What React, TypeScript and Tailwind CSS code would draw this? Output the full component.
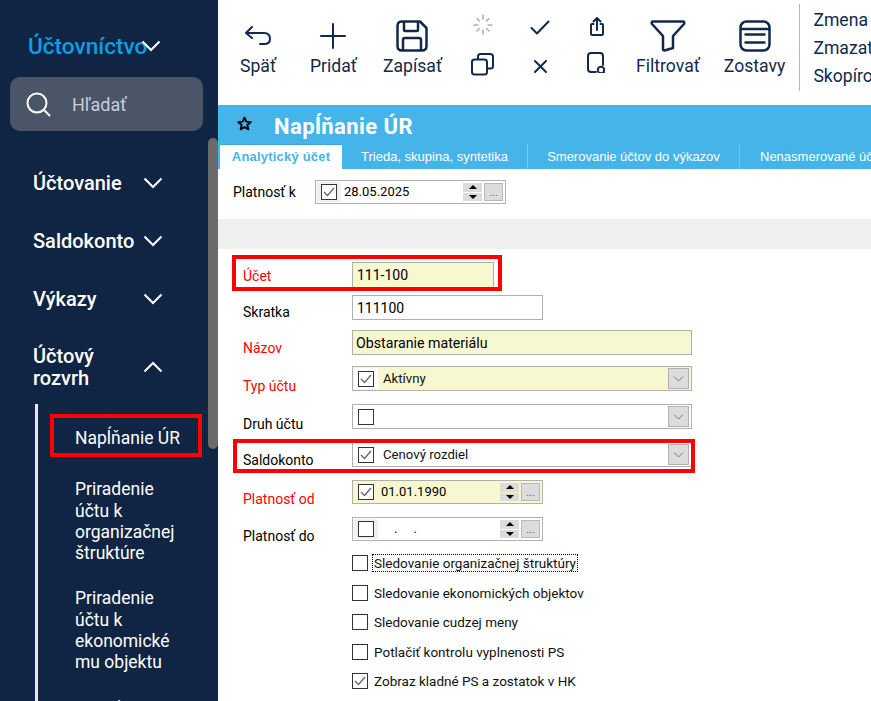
import React from "react";

const navy = "#11294a";

function Chevron({ up = false, className = "" }: { up?: boolean; className?: string }) {
  return (
    <svg width="20" height="12" viewBox="0 0 20 12" className={className} fill="none" stroke="white" strokeWidth="2">
      <path d={up ? "M1.5 10.5 L10 2 L18.5 10.5" : "M1.5 1.5 L10 10 L18.5 1.5"} />
    </svg>
  );
}

function NavItem({ label, className = "" }: { label: string; className?: string }) {
  return (
    <div className={`flex items-center justify-between pl-[33px] pr-[55px] text-[20px] font-medium text-white leading-[22px] ${className}`}>
      <span>{label}</span>
      <Chevron />
    </div>
  );
}

function Sidebar() {
  return (
    <aside className="relative w-[218px] h-full shrink-0 bg-[#0f2543] overflow-hidden">
      <div className="flex items-center pl-[28px] pt-[33px] h-[60px]">
        <span className="text-[22.6px] text-[#0b9fe3] font-medium leading-[26px]">Účtovníctvo</span>
        <Chevron className="-ml-[6px] -mt-[1px]" />
      </div>
      <div className="ml-[10px] mt-[17px] w-[193px] h-[54px] rounded-[10px] bg-[#4a5568] flex items-center pl-[16px]">
        <svg width="25" height="25" viewBox="0 0 25 25" fill="none" stroke="white" strokeWidth="2">
          <circle cx="11" cy="11" r="9.5" />
          <path d="M18 18 L24 24" />
        </svg>
        <span className="ml-[21px] text-[18px] text-[#c9ced6]">Hľadať</span>
      </div>
      <NavItem label="Účtovanie" className="mt-[41px]" />
      <NavItem label="Saldokonto" className="mt-[36px]" />
      <NavItem label="Výkazy" className="mt-[36px]" />
      <div className="mt-[35px] flex items-center justify-between pl-[33px] pr-[55px] text-[20px] font-medium text-white leading-[22px]">
        <span>
          Účtový
          <br />
          rozvrh
        </span>
        <Chevron up />
      </div>
      <div className="mt-[15px] ml-[35px] border-l-[3px] border-[#e8e8e8] pl-[37px] text-[17.5px] leading-[21.3px] text-white h-[300px]">
        <div className="pt-[24px]">Napĺňanie ÚR</div>
        <div className="mt-[30px] w-[104px]">
          Priradenie
          <br />
          účtu k
          <br />
          organizačnej
          <br />
          štruktúre
        </div>
        <div className="mt-[24px] w-[104px]">
          Priradenie
          <br />
          účtu k
          <br />
          ekonomické
          <br />
          mu objektu
        </div>
        <div className="mt-[24px]">Priradenie</div>
      </div>
      <div className="absolute left-[50px] top-[414px] w-[152px] h-[43px] border-[4px] border-[#ff0000]" />
      <div className="absolute left-[208px] top-[138px] w-[10px] h-[311px] rounded-t-[5px] rounded-b-[5px] bg-[#6b6b6b]" />
    </aside>
  );
}

function TButton({ label, icon, className = "" }: { label: string; icon: React.ReactNode; className?: string }) {
  return (
    <div className={`flex flex-col items-center text-[17.6px] leading-[20px] text-[#11294a] ${className}`}>
      <div className="h-[34px] flex items-center justify-center">{icon}</div>
      <div className="mt-[3px] whitespace-nowrap">{label}</div>
    </div>
  );
}

const stroke = { fill: "none", stroke: navy, strokeWidth: 2, strokeLinecap: "round" as const, strokeLinejoin: "round" as const };

function Toolbar() {
  return (
    <div className="h-[105px] flex items-start shrink-0 overflow-hidden relative">
      <TButton
        label="Späť"
        className="ml-[22px] mt-[19px]"
        icon={
          <svg width="28" height="24" viewBox="0 0 28 24" {...stroke}>
            <path d="M8 3 L2 9 L8 14 M2 9 H20 Q26 9 26 15 Q26 20 20 20 H16" />
          </svg>
        }
      />
      <TButton
        label="Pridať"
        className="ml-[34px] mt-[19px]"
        icon={
          <svg width="26" height="26" viewBox="0 0 26 26" {...stroke}>
            <path d="M13 1 V25 M1 13 H25" />
          </svg>
        }
      />
      <TButton
        label="Zapísať"
        className="ml-[26px] mt-[19px]"
        icon={
          <svg width="32" height="32" viewBox="0 0 32 32" {...stroke} strokeWidth="2.5">
            <path d="M6 1.5 H24 L30.5 8 V26 Q30.5 30.5 26 30.5 H6 Q1.5 30.5 1.5 26 V6 Q1.5 1.5 6 1.5 Z" />
            <path d="M8 2 V10 Q8 11 9 11 H21 Q22 11 22 10 V2 M7 30 V20 Q7 18 9 18 H23 Q25 18 25 20 V30" />
          </svg>
        }
      />
      <div className="ml-[29px] mt-[14px] flex flex-col items-center w-[32px]">
        <svg width="20" height="22" viewBox="0 0 20 22" fill="none" stroke="#a9b2bd" strokeWidth="1.6" strokeLinecap="round">
          <path d="M10 1 V5 M10 16 V20 M1 11 H5 M15 11 H19 M4 4.5 L6.5 7 M13.5 14.5 L16 17 M16 4.5 L13.5 7 M6.5 14.5 L4 17" />
        </svg>
        <svg width="23" height="23" viewBox="0 0 23 23" className="mt-[17px]" {...stroke}>
          <rect x="1" y="6.5" width="15" height="15" rx="2.5" />
          <path d="M7 6 V3.5 Q7 1 9.5 1 H19 Q22 1 22 3.5 V13 Q22 15.5 19.5 15.5 H16.5" />
        </svg>
      </div>
      <div className="ml-[36px] mt-[20px] flex flex-col items-center w-[24px]">
        <svg width="20" height="15" viewBox="0 0 20 15" {...stroke}>
          <path d="M1.5 8 L7 13.5 L18.5 1.5" />
        </svg>
        <svg width="13" height="13" viewBox="0 0 13 13" className="mt-[25px]" {...stroke}>
          <path d="M1 1 L12 12 M12 1 L1 12" />
        </svg>
      </div>
      <div className="ml-[37px] mt-[17px] flex flex-col items-center w-[24px]">
        <svg width="14" height="19" viewBox="0 0 14 19" {...stroke}>
          <path d="M3.5 7 H2 Q1 7 1 8 V16.5 Q1 18 2.5 18 H11.5 Q13 18 13 16.5 V8 Q13 7 12 7 H10.5 M7 13 V1 M3.5 4.5 L7 1 L10.5 4.5" />
        </svg>
        <svg width="19" height="21" viewBox="0 0 19 21" className="mt-[16px]" {...stroke}>
          <path d="M9 20 H4 Q1 20 1 17 V4 Q1 1 4 1 H13 Q16 1 16 4 V13" />
          <circle cx="14" cy="18" r="3.2" />
          <path d="M16.5 20.5 L18 22" />
        </svg>
      </div>
      <TButton
        label="Filtrovať"
        className="ml-[30px] mt-[19px]"
        icon={
          <svg width="36" height="32" viewBox="0 0 36 32" {...stroke} strokeWidth="2.5">
            <path d="M3 1.5 H33 Q35 1.5 34 4 L23 16 V28 L14.5 30.5 Q13 30.5 13 29 V16 L2 4 Q1 1.5 3 1.5 Z" />
          </svg>
        }
      />
      <TButton
        label="Zostavy"
        className="ml-[24px] mt-[19px]"
        icon={
          <svg width="32" height="32" viewBox="0 0 32 32" {...stroke} strokeWidth="2.5">
            <rect x="1.5" y="1.5" width="29" height="29" rx="6" />
            <path d="M2 9 H30 M6.5 14.5 H25.5 M6.5 22.5 H25.5" />
          </svg>
        }
      />
      <div className="ml-[14px] mt-[4px] w-px h-[87px] bg-[#b5b5b5] shrink-0" />
      <div className="ml-[13px] mt-[6px] text-[17.6px] leading-[28px] text-[#11294a] whitespace-nowrap">
        <div>Zmena</div>
        <div>Zmazať</div>
        <div>Skopírovať</div>
      </div>
    </div>
  );
}

function Tabs() {
  return (
    <div className="h-[25px] flex items-stretch text-[13px] text-white font-['Liberation_Sans',sans-serif]">
      <div className="ml-[2px] w-[122px] shrink-0 bg-white border-t border-[#3ba7dd] flex items-center justify-center font-bold text-[#45b5e9] text-[13px] tracking-[0.2px]">
        Analytický účet
      </div>
      <div className="w-[186px] shrink-0 flex items-center justify-center border-r border-[#8cc0dc]">Trieda, skupina, syntetika</div>
      <div className="w-[212px] shrink-0 flex items-center justify-center border-r border-[#8cc0dc] whitespace-nowrap">Smerovanie účtov do výkazov</div>
      <div className="pl-[20px] flex items-center whitespace-nowrap">Nenasmerované účty</div>
    </div>
  );
}

function Check({ on = false }: { on?: boolean }) {
  return (
    <div className="w-[16px] h-[16px] shrink-0 border border-[#333] bg-white flex items-center justify-center">
      {on && (
        <svg width="12" height="10" viewBox="0 0 12 10" fill="none" stroke="#666" strokeWidth="1.3">
          <path d="M1 5 L4.5 8.5 L11 1" />
        </svg>
      )}
    </div>
  );
}

function DropBtn() {
  return (
    <div className="w-[21px] h-[21px] bg-[#dcdcdc] border border-[#b0b0b0] flex items-center justify-center">
      <svg width="11" height="6" viewBox="0 0 11 6" fill="none" stroke="#777" strokeWidth="1">
        <path d="M1 0.5 L5.5 5 L10 0.5" />
      </svg>
    </div>
  );
}

function Spin() {
  return (
    <div className="flex flex-col gap-[1px] w-[19px] h-[18px]">
      <div className="flex-1 bg-[#dcdcdc] flex items-center justify-center">
        <div className="w-0 h-0 border-x-[4px] border-x-transparent border-b-[4px] border-b-black" />
      </div>
      <div className="flex-1 bg-[#dcdcdc] flex items-center justify-center">
        <div className="w-0 h-0 border-x-[4px] border-x-transparent border-t-[4px] border-t-black" />
      </div>
    </div>
  );
}

function Dots() {
  return (
    <div className="w-[19px] h-[18px] bg-[#dcdcdc] border border-[#b8b8b8] flex items-end justify-center text-[11px] leading-[14px] text-[#666]">...</div>
  );
}

function Label({ text, red = false, pt }: { text: string; red?: boolean; pt: string }) {
  return <div className={`w-[109px] shrink-0 text-[14px] leading-[18px] ${pt} ${red ? "text-[#ff0000]" : "text-black"}`}>{text}</div>;
}

function CheckLine({ text, on = false, focus = false, className = "" }: { text: string; on?: boolean; focus?: boolean; className?: string }) {
  return (
    <div className={`ml-[109px] flex items-center h-[16px] text-[13.5px] text-[#111] ${className}`}>
      <Check on={on} />
      <span className={`ml-[5px] px-[1px] leading-[16px] ${focus ? "outline-1 outline-dotted outline-black" : ""}`}>{text}</span>
    </div>
  );
}

function Combo({ on, text, yellow = false, className = "" }: { on: boolean; text: string; yellow?: boolean; className?: string }) {
  return (
    <div className={`w-[340px] h-[25px] border border-[#b0b0b0] flex items-center pr-[2px] ${yellow ? "bg-[#f8f8d0]" : "bg-white"} ${className}`}>
      <div className="ml-[1px] w-[24px] h-[21px] bg-white flex items-center justify-center">
        <Check on={on} />
      </div>
      <span className="ml-[5px] flex-1 text-[13.2px] text-[#111]">{text}</span>
      <DropBtn />
    </div>
  );
}

function DateField({ on, text, yellow = false, className = "" }: { on: boolean; text: string; yellow?: boolean; className?: string }) {
  return (
    <div className={`w-[191px] h-[24px] border border-[#b0b0b0] flex items-center pr-[2px] ${yellow ? "bg-[#f8f8d0]" : "bg-white"} ${className}`}>
      <div className={`ml-[1px] w-[24px] h-[20px] flex items-center justify-center ${yellow ? "" : "bg-[#f0f0f0]"}`}>
        <Check on={on} />
      </div>
      <span className="ml-[3px] flex-1 text-[13px] text-black">{text}</span>
      <Spin />
      <div className="ml-[2px]">
        <Dots />
      </div>
    </div>
  );
}

function Form() {
  return (
    <div className="relative flex-1 font-['Roboto',sans-serif] bg-white">
      <div className="pt-[11px] pl-[15px] flex items-start">
        <div className="w-[82px] text-[14px] leading-[18px] pt-[3px] text-black whitespace-nowrap">Platnosť k</div>
        <div className="w-[191px] h-[24px] border border-[#b0b0b0] bg-white flex items-center pr-[2px]">
          <div className="ml-[1px] w-[24px] h-[20px] bg-[#f0f0f0] flex items-center justify-center">
            <Check on />
          </div>
          <span className="ml-[3px] flex-1 text-[13px] text-black">28.05.2025</span>
          <Spin />
          <div className="ml-[2px]">
            <Dots />
          </div>
        </div>
      </div>
      <div className="mt-[15px] h-[30px] bg-[#f0f0f0]" />
      <div className="pl-[25px]">
        <div className="mt-[13px] flex items-start h-[26px]">
          <Label text="Účet" red pt="pt-[5px]" />
          <div className="w-[142px] h-[26px] bg-[#f8f8d0] border border-[#b0b0b0] pl-[4px] text-[14px] leading-[24px] text-black">111-100</div>
        </div>
        <div className="mt-[7px] flex items-start h-[25px]">
          <Label text="Skratka" pt="pt-[8px]" />
          <div className="w-[191px] h-[25px] bg-white border border-[#b0b0b0] pl-[4px] text-[14px] leading-[24px] text-black">111100</div>
        </div>
        <div className="mt-[10px] flex items-start h-[25px]">
          <Label text="Názov" red pt="pt-[9px]" />
          <div className="w-[340px] h-[25px] bg-[#f8f8d0] border border-[#b0b0b0] pl-[3px] text-[14.2px] leading-[24px] text-black">Obstaranie materiálu</div>
        </div>
        <div className="mt-[11px] flex items-start h-[25px]">
          <Label text="Typ účtu" red pt="pt-[11px]" />
          <Combo on text="Aktívny" yellow />
        </div>
        <div className="mt-[13px] flex items-start h-[25px]">
          <Label text="Druh účtu" pt="pt-[11px]" />
          <Combo on={false} text="" />
        </div>
        <div className="mt-[13px] flex items-start h-[25px]">
          <Label text="Saldokonto" pt="pt-[9px]" />
          <Combo on text="Cenový rozdiel" />
        </div>
        <div className="mt-[13px] flex items-start h-[24px]">
          <Label text="Platnosť od" red pt="pt-[10px]" />
          <DateField on text="01.01.1990" yellow />
        </div>
        <div className="mt-[13px] flex items-start h-[24px]">
          <Label text="Platnosť do" pt="pt-[10px]" />
          <DateField on={false} text="&nbsp;&nbsp;&nbsp;&nbsp;.&nbsp;&nbsp;&nbsp;&nbsp;&nbsp;." />
        </div>
        <CheckLine text="Sledovanie organizačnej štruktúry" focus className="mt-[14px]" />
        <CheckLine text="Sledovanie ekonomických objektov" className="mt-[14px]" />
        <CheckLine text="Sledovanie cudzej meny" className="mt-[13px]" />
        <CheckLine text="Potlačiť kontrolu vyplnenosti PS" className="mt-[14px]" />
        <CheckLine text="Zobraz kladné PS a zostatok v HK" on className="mt-[13px]" />
      </div>
      <div className="absolute left-[14px] top-[86px] w-[270px] h-[36px] border-[4px] border-[#ff0000]" />
      <div className="absolute left-[15px] top-[270px] w-[462px] h-[34px] border-[4px] border-[#ff0000]" />
    </div>
  );
}

export default function App() {
  return (
    <div className="w-[871px] h-[701px] overflow-hidden flex bg-white font-['Roboto',sans-serif]">
      <Sidebar />
      <main className="flex-1 min-w-0 flex flex-col">
        <Toolbar />
        <div className="h-[64px] bg-[#45b5e9] shrink-0 flex flex-col">
          <div className="h-[39px] flex items-center pl-[19px]">
            <svg width="15" height="15" viewBox="0 0 24 24" fill="none" stroke="black" strokeWidth="3" strokeLinejoin="round" className="-mt-[2px]">
              <path d="M12 2.5 L14.9 9 L22 9.7 L16.6 14.4 L18.2 21.4 L12 17.7 L5.8 21.4 L7.4 14.4 L2 9.7 L9.1 9 Z" />
            </svg>
            <span className="ml-[22px] mt-[3px] text-[22px] font-bold text-white tracking-[0.45px]">Napĺňanie ÚR</span>
          </div>
          <Tabs />
        </div>
        <Form />
      </main>
    </div>
  );
}
